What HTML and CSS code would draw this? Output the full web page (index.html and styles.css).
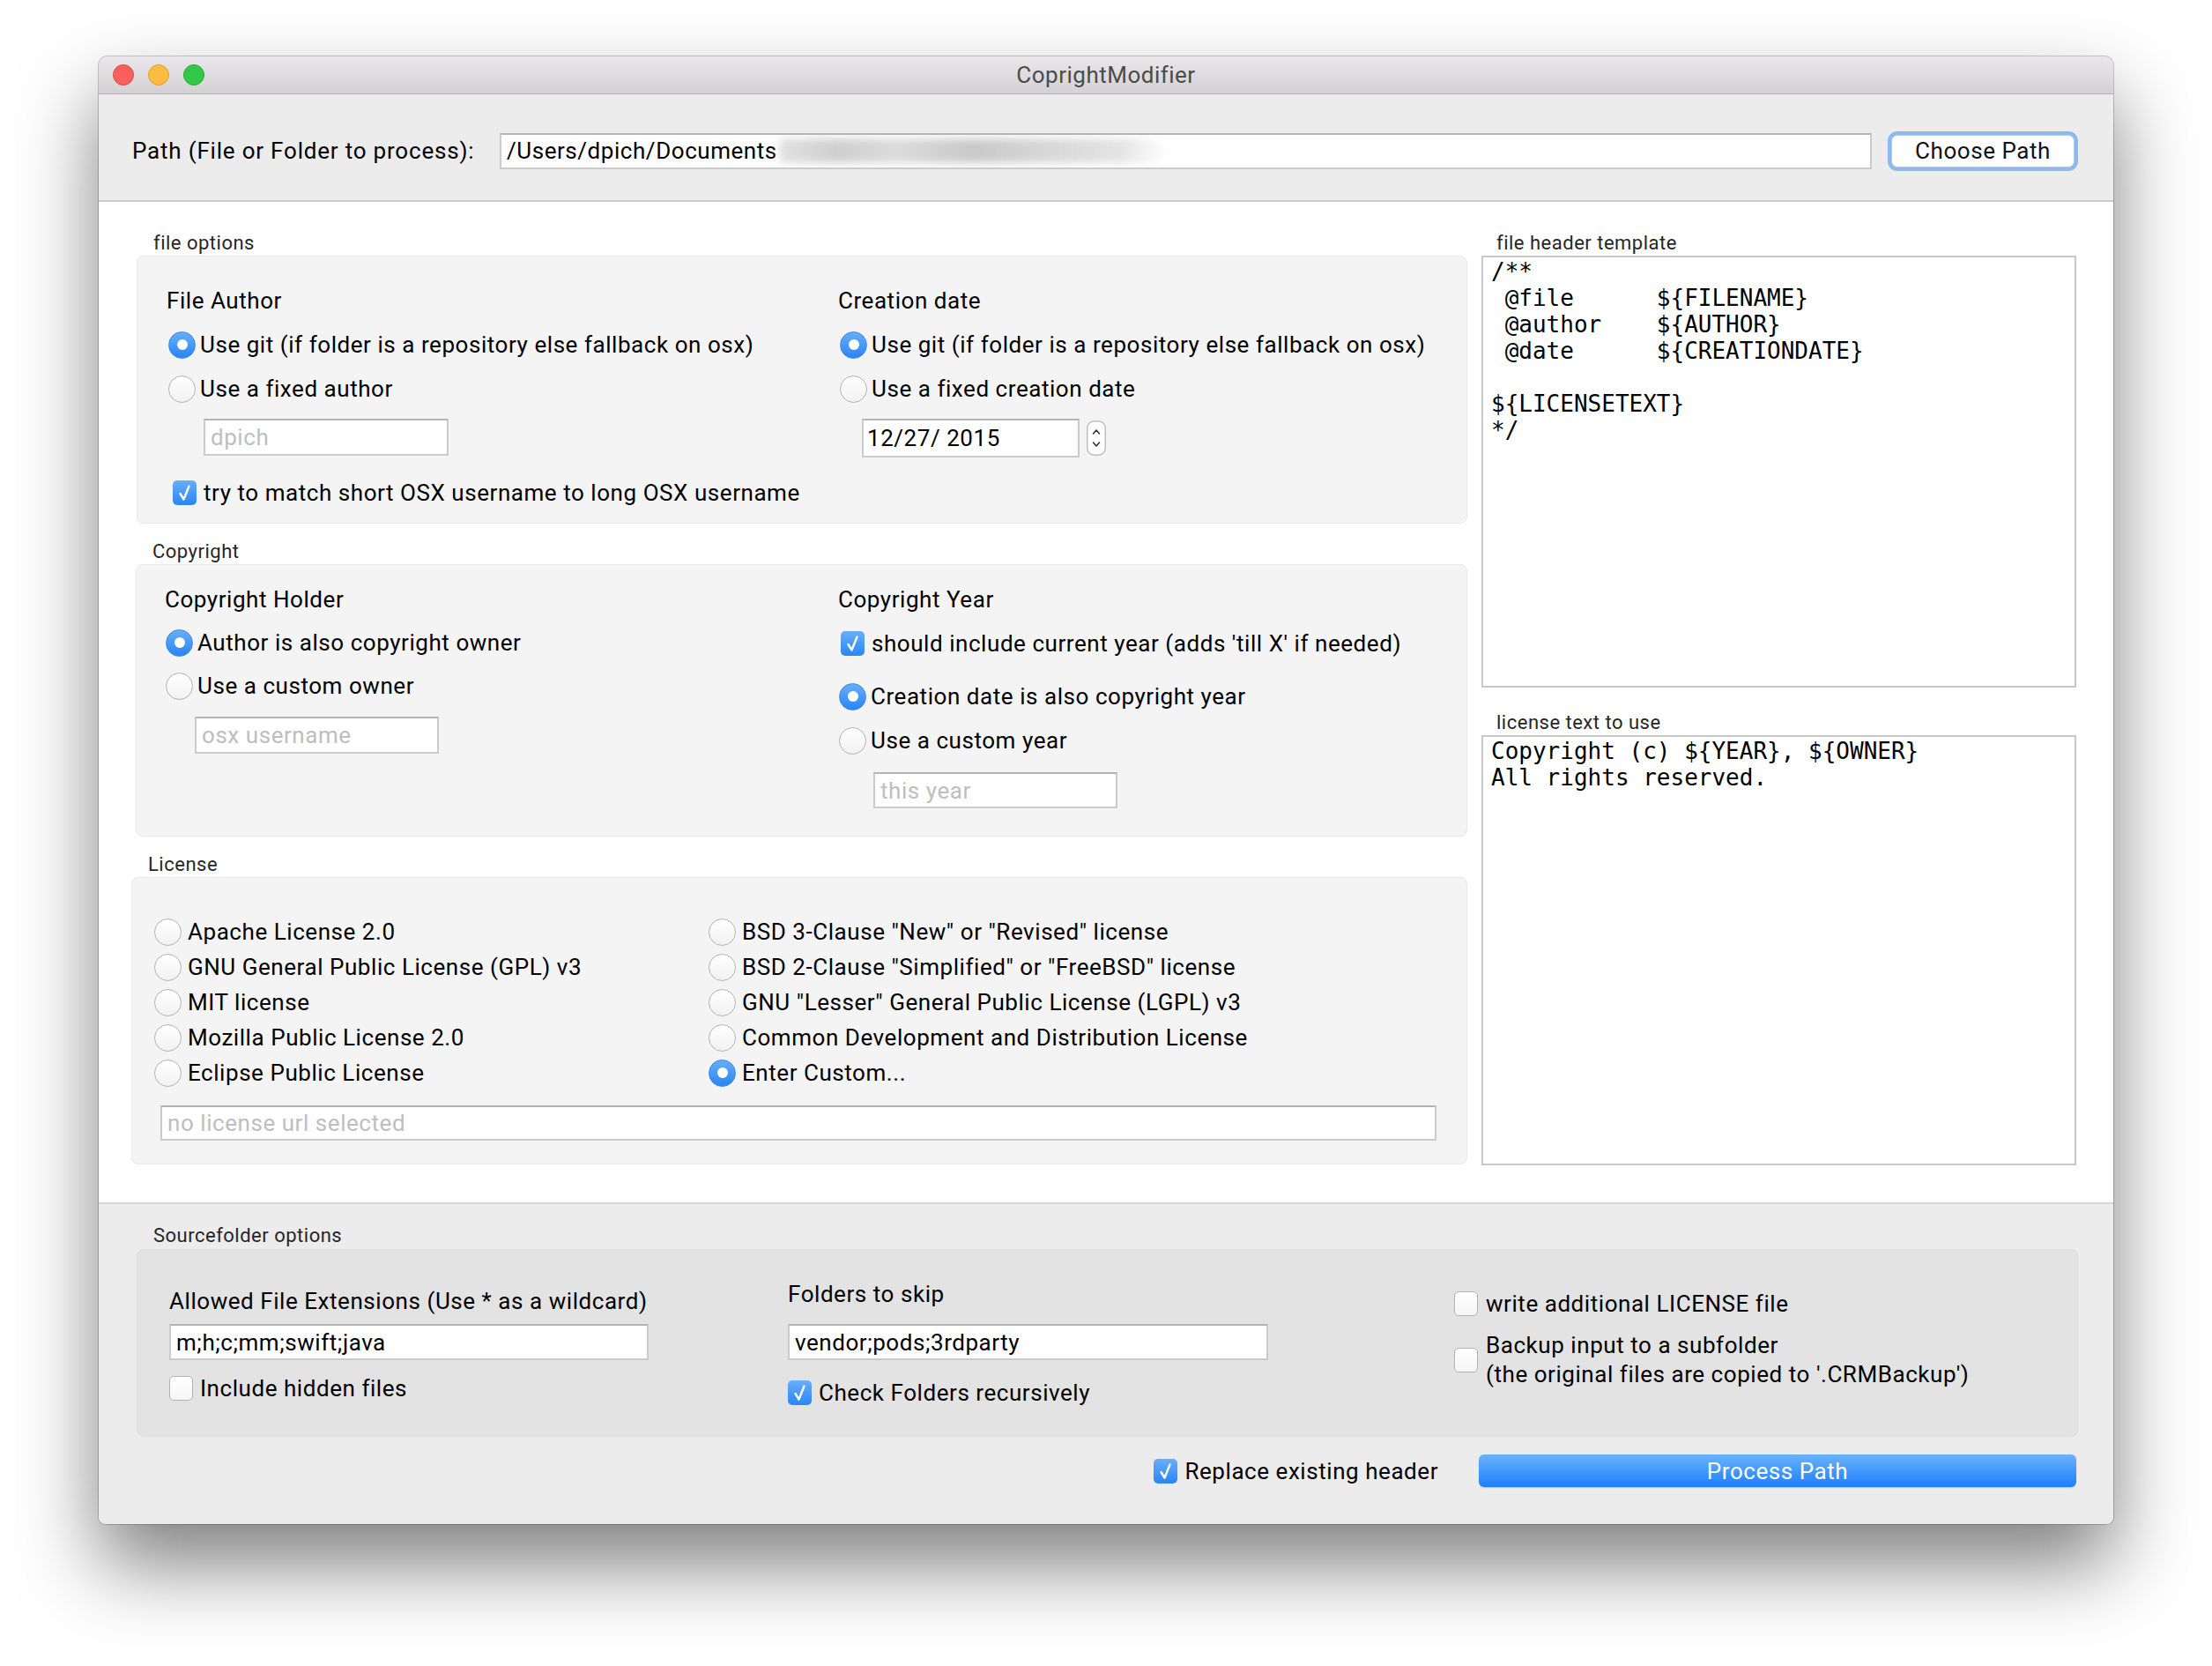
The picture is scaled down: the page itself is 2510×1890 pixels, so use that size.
FILE: index.html
```html
<!DOCTYPE html>
<html>
<head>
<meta charset="utf-8">
<title>CoprightModifier</title>
<link rel="stylesheet" href="styles.css">
</head>
<body>
<div class="stage">
  <div class="window">
    <div class="titlebar">
      <div class="lights">
        <span class="light red"></span><span class="light yellow"></span><span class="light green"></span>
      </div>
      <div class="title">CoprightModifier</div>
      <div></div>
    </div>

    <div class="toolbar">
      <span class="path-label">Path (File or Folder to process):</span>
      <div class="field path-field"><span>/Users/dpich/Documents</span><span class="blur"></span></div>
      <button class="btn choose">Choose Path</button>
    </div>

    <div class="main">
      <div class="left-col">
        <section class="group g-file">
          <div class="group-label">file options</div>
          <div class="box box-file">
            <div class="col col-gap18">
              <div class="heading">File Author</div>
              <div class="opt"><span class="radio on"></span>Use git (if folder is a repository else fallback on osx)</div>
              <div class="opt"><span class="radio"></span>Use a fixed author</div>
              <div class="field f-author"><span class="ph">dpich</span></div>
            </div>
            <div class="col col-gap18">
              <div class="heading">Creation date</div>
              <div class="opt"><span class="radio on"></span>Use git (if folder is a repository else fallback on osx)</div>
              <div class="opt"><span class="radio"></span>Use a fixed creation date</div>
              <div class="date-row">
                <div class="field f-date"><span>12/27/ 2015</span></div>
                <svg class="stepper" viewBox="0 0 22 40" width="22" height="40">
                  <rect x="0.75" y="0.75" width="20.5" height="38.5" rx="8" fill="#fff" stroke="#bdbdbd" stroke-width="1.5"/>
                  <path d="M7.5 15 L11 11 L14.5 15" fill="none" stroke="#333" stroke-width="1.6" stroke-linecap="round" stroke-linejoin="round"/>
                  <path d="M7.5 25 L11 29 L14.5 25" fill="none" stroke="#333" stroke-width="1.6" stroke-linecap="round" stroke-linejoin="round"/>
                </svg>
              </div>
            </div>
            <div class="opt chk match-row"><span class="check on"><svg viewBox="0 0 27 28" width="27" height="28"><path d="M8.5 15 L12.5 21.5 L18.5 6.5" fill="none" stroke="#fff" stroke-width="2.4" stroke-linecap="round" stroke-linejoin="round"/></svg></span>try to match short OSX username to long OSX username</div>
          </div>
        </section>

        <section class="group g-copy">
          <div class="group-label">Copyright</div>
          <div class="box box-copy">
            <div class="col col-gap17">
              <div class="heading">Copyright Holder</div>
              <div class="opt"><span class="radio on"></span>Author is also copyright owner</div>
              <div class="opt"><span class="radio"></span>Use a custom owner</div>
              <div class="field f-owner"><span class="ph">osx username</span></div>
            </div>
            <div class="col col-gap18">
              <div class="heading">Copyright Year</div>
              <div class="opt chk year-check"><span class="check on"><svg viewBox="0 0 27 28" width="27" height="28"><path d="M8.5 15 L12.5 21.5 L18.5 6.5" fill="none" stroke="#fff" stroke-width="2.4" stroke-linecap="round" stroke-linejoin="round"/></svg></span>should include current year (adds 'till X' if needed)</div>
              <div class="opt"><span class="radio on"></span>Creation date is also copyright year</div>
              <div class="opt"><span class="radio"></span>Use a custom year</div>
              <div class="field f-year"><span class="ph">this year</span></div>
            </div>
          </div>
        </section>

        <section class="group g-license">
          <div class="group-label">License</div>
          <div class="box box-license">
            <div class="opt lic"><span class="radio"></span>Apache License 2.0</div>
            <div class="opt lic"><span class="radio"></span>BSD 3-Clause "New" or "Revised" license</div>
            <div class="opt lic"><span class="radio"></span>GNU General Public License (GPL) v3</div>
            <div class="opt lic"><span class="radio"></span>BSD 2-Clause "Simplified" or "FreeBSD" license</div>
            <div class="opt lic"><span class="radio"></span>MIT license</div>
            <div class="opt lic"><span class="radio"></span>GNU "Lesser" General Public License (LGPL) v3</div>
            <div class="opt lic"><span class="radio"></span>Mozilla Public License 2.0</div>
            <div class="opt lic"><span class="radio"></span>Common Development and Distribution License</div>
            <div class="opt lic"><span class="radio"></span>Eclipse Public License</div>
            <div class="opt lic"><span class="radio on"></span>Enter Custom...</div>
            <div class="field f-url"><span class="ph">no license url selected</span></div>
          </div>
        </section>
      </div>

      <div class="right-col">
        <div class="group-label rl">file header template</div>
        <div class="code code-header">/**
 @file      ${FILENAME}
 @author    ${AUTHOR}
 @date      ${CREATIONDATE}

${LICENSETEXT}
*/</div>
        <div class="group-label rl second">license text to use</div>
        <div class="code code-license">Copyright (c) ${YEAR}, ${OWNER}
All rights reserved.</div>
      </div>
    </div>

    <div class="bottom">
      <div class="group-label bl">Sourcefolder options</div>
      <div class="box box-source">
        <div class="scol scol1">
          <div class="heading">Allowed File Extensions (Use * as a wildcard)</div>
          <div class="field f-ext"><span>m;h;c;mm;swift;java</span></div>
          <div class="opt chk"><span class="check"></span>Include hidden files</div>
        </div>
        <div class="scol scol2">
          <div class="heading">Folders to skip</div>
          <div class="field f-skip"><span>vendor;pods;3rdparty</span></div>
          <div class="opt chk"><span class="check on"><svg viewBox="0 0 27 28" width="27" height="28"><path d="M8.5 15 L12.5 21.5 L18.5 6.5" fill="none" stroke="#fff" stroke-width="2.4" stroke-linecap="round" stroke-linejoin="round"/></svg></span>Check Folders recursively</div>
        </div>
        <div class="scol scol3">
          <div class="opt chk"><span class="check"></span>write additional LICENSE file</div>
          <div class="opt chk multi"><span class="check"></span>
            <div class="lines"><div>Backup input to a subfolder</div><div>(the original files are copied to '.CRMBackup')</div></div>
          </div>
        </div>
      </div>
      <div class="footer">
        <div class="opt chk"><span class="check on"><svg viewBox="0 0 27 28" width="27" height="28"><path d="M8.5 15 L12.5 21.5 L18.5 6.5" fill="none" stroke="#fff" stroke-width="2.4" stroke-linecap="round" stroke-linejoin="round"/></svg></span>Replace existing header</div>
        <button class="btn primary">Process Path</button>
      </div>
    </div>
  </div>
</div>
</body>
</html>
```

FILE: styles.css
```css
* { box-sizing: border-box; margin: 0; padding: 0; }
html, body { background: #ffffff; }
body {
  font-family: Roboto, "Liberation Sans", sans-serif;
  font-size: 26px;
  letter-spacing: 0.55px;
  color: #000;
  overflow: hidden;
}
.stage { padding: 64px 0 0 112px; height: 1890px; }

.window {
  width: 2286px;
  height: 1665px;
  border-radius: 10px 10px 8px 8px;
  overflow: hidden;
  display: flex;
  flex-direction: column;
  background: #ececec;
  box-shadow: 0 46px 90px rgba(0,0,0,0.5), 0 0 0 1px rgba(0,0,0,0.2);
}

/* title bar */
.titlebar {
  height: 43px;
  flex: none;
  display: grid;
  grid-template-columns: 1fr auto 1fr;
  align-items: center;
  background: linear-gradient(#e9e7e9, #d3d1d3);
  border-bottom: 1px solid #b3b1b3;
}
.lights { display: flex; gap: 16px; padding-left: 16px; }
.light { width: 24px; height: 24px; border-radius: 50%; }
.red { background: #fc605c; border: 1px solid #df4a45; }
.yellow { background: #fdbc40; border: 1px solid #dea035; }
.green { background: #34c84a; border: 1px solid #27aa35; }
.title { color: #4b4b4b; font-size: 26px; letter-spacing: 0.5px; }

/* toolbar */
.toolbar {
  height: 122px;
  flex: none;
  display: flex;
  align-items: center;
  padding: 8px 44px 0 38px;
  background: #ececec;
  border-bottom: 2px solid #cacaca;
}
.path-label { flex: none; width: 394px; white-space: nowrap; letter-spacing: 0.8px; }
.field {
  background: #fff;
  border: 2px solid #cbcbcb;
  border-top-color: #b4b4b4;
  height: 42px;
  display: flex;
  align-items: center;
  padding-left: 6px;
  white-space: nowrap;
  overflow: hidden;
}
.path-field { flex: 1; height: 41px; margin-left: 23px; }
.blur {
  display: inline-block;
  width: 440px;
  height: 28px;
  margin-left: 2px;
  background: linear-gradient(90deg, #e2e2e2, #cfcfcf 15%, #dcdcdc 30%, #c9c9c9 50%, #d8d8d8 70%, #e4e4e4 88%, #ffffff);
  filter: blur(5px);
}
.ph { color: #bebebe; }

.btn {
  font: inherit;
  letter-spacing: inherit;
  border: none;
  cursor: default;
}
.choose {
  flex: none;
  width: 208px;
  height: 37px;
  margin-left: 22px;
  background: #fff;
  border: 1px solid #b9c8dc;
  border-radius: 7px;
  box-shadow: 0 0 0 4px #8cbaf0;
  color: #111;
}

/* main */
.main {
  height: 1137px;
  flex: none;
  background: #fff;
  display: grid;
  grid-template-columns: 1516px 675px;
  column-gap: 16px;
  padding: 33px 42px 0 37px;
  border-bottom: 2px solid #d6d6d6;
}
.left-col { display: flex; flex-direction: column; gap: 18px; }

.group-label {
  font-size: 22px;
  line-height: 28px;
  height: 28px;
  padding-left: 19px;
  color: #262626;
  letter-spacing: 0.5px;
}
.box {
  background: #f4f4f4;
  border: 1px solid #e8e8e8;
  border-radius: 8px;
}
.heading { height: 32px; line-height: 32px; white-space: nowrap; }
.opt {
  display: flex;
  align-items: center;
  gap: 5px;
  height: 32px;
  white-space: nowrap;
}
.opt.chk { gap: 8px; }

.radio {
  flex: none;
  width: 31px;
  height: 31px;
  border-radius: 50%;
  background: linear-gradient(#ffffff, #f2f2f2);
  border: 1.5px solid #b2b2b2;
}
.radio.on {
  background: linear-gradient(#67aef9, #2a85f5);
  border-color: #3b87ec;
  display: flex;
  align-items: center;
  justify-content: center;
}
.radio.on::after {
  content: "";
  width: 12px;
  height: 12px;
  border-radius: 50%;
  background: #fff;
}
.check {
  flex: none;
  width: 27px;
  height: 28px;
  border-radius: 5px;
  background: linear-gradient(#ffffff, #f6f6f6);
  border: 1.5px solid #b2b2b2;
  display: flex;
  align-items: center;
  justify-content: center;
  overflow: hidden;
}
.check.on {
  background: linear-gradient(#69affa, #2a85f5);
  border: none;
}

.col { display: flex; flex-direction: column; align-items: flex-start; }
.col-gap18 { gap: 18px; }
.col-gap17 { gap: 17px; }

/* file options */
.g-file { margin-left: 6px; }
.box-file {
  width: 1510px;
  height: 304px;
  display: grid;
  grid-template-columns: 762px 1fr;
  align-content: start;
  padding: 34px 0 0 33px;
}
.box-file .opt { margin-left: 2px; }
.f-author { width: 278px; margin-left: 42px; }
.date-row { display: flex; align-items: center; gap: 8px; margin-left: 27px; }
.f-date { width: 247px; height: 44px; padding-left: 4px; }
.stepper { flex: none; }
.box-file .match-row { grid-column: 1 / -1; margin-top: 24px; margin-left: 7px; }

/* copyright */
.g-copy { margin-left: 5px; }
.box-copy {
  width: 1511px;
  height: 309px;
  display: grid;
  grid-template-columns: 764px 1fr;
  align-content: start;
  padding: 23px 0 0 32px;
}
.box-copy .opt { margin-left: 1px; }
.f-owner { width: 277px; margin-left: 34px; margin-top: 2px; }
.box-copy .year-check { margin-left: 3px; margin-bottom: 10px; }
.f-year { width: 277px; height: 41px; margin-left: 40px; margin-top: 2px; }

/* license */
.box-license {
  width: 1516px;
  height: 326px;
  display: grid;
  grid-template-columns: 629px 1fr;
  grid-auto-rows: 40px;
  align-content: start;
  padding: 41px 0 0 25px;
}
.opt.lic { height: 40px; gap: 7px; }
.f-url {
  grid-column: 1 / -1;
  width: 1448px;
  height: 40px;
  margin: 17px 0 0 7px;
}

/* right column */
.right-col { display: flex; flex-direction: column; }
.group-label.rl { padding-left: 17px; }
.group-label.second { margin-top: 26px; }
.code {
  background: #fff;
  border: 2px solid #c8c8c8;
  font-family: "DejaVu Sans Mono", "Liberation Mono", monospace;
  font-size: 26px;
  line-height: 30px;
  letter-spacing: 0;
  padding: 1px 9px 0;
  white-space: pre;
  color: #000;
}
.code-header { height: 490px; }
.code-license { height: 488px; }

/* bottom */
.bottom {
  flex: 1;
  background: #ececec;
  padding-top: 22px;
}
.group-label.bl { padding-left: 62px; }
.box-source {
  margin: 1px 40px 0 43px;
  height: 213px;
  background: #e3e3e3;
  border: 1px solid #dcdcdc;
  display: flex;
}
.scol { display: flex; flex-direction: column; align-items: flex-start; }
.scol1 { width: 738px; padding: 42px 0 0 36px; }
.scol1 .heading { margin-bottom: 10px; }
.scol1 .field { margin-bottom: 16px; }
.scol2 { width: 756px; padding-top: 34px; }
.scol2 .heading { margin-bottom: 18px; }
.scol2 .field { margin-bottom: 21px; }
.scol3 { flex: 1; padding-top: 45px; gap: 15px; }
.f-ext { width: 544px; height: 41px; }
.f-skip { width: 545px; height: 41px; }
.opt.multi { height: 66px; gap: 9px; }
.scol3 .opt.chk { gap: 9px; }
.lines { line-height: 33px; }

.footer {
  display: flex;
  justify-content: flex-end;
  align-items: center;
  gap: 46px;
  margin-top: 20px;
  padding-right: 42px;
}
.primary {
  width: 678px;
  height: 37px;
  border-radius: 6px;
  background: linear-gradient(#6cb2fa, #1b80fb);
  color: #fff;
  box-shadow: 0 1px 1px rgba(0,0,0,0.15);
}
```
